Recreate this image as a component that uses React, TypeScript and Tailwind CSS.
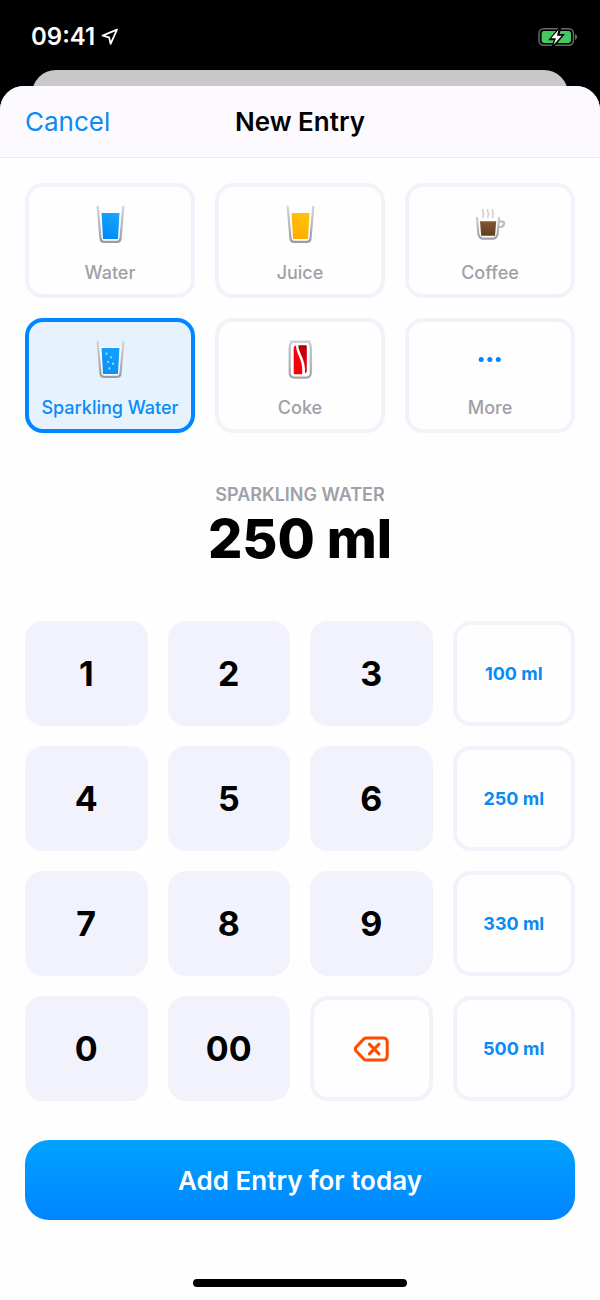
import { useState } from "react";

type Drink = {
  id: string;
  name: string;
  icon: React.ReactNode;
};

function LocationIcon() {
  return (
    <svg width="18" height="18" viewBox="0 0 18 18" fill="none">
      <path
        d="M16 1.600 1.600 7.600l6.500 1.800L9.600 15.800Z"
        stroke="#fff"
        strokeWidth="1.800"
        strokeLinejoin="round"
      />
    </svg>
  );
}

function BatteryIcon() {
  return (
    <svg width="40" height="20" viewBox="0 0 40 20" fill="none">
      <rect x="1" y="1.800" width="34.400" height="16.400" rx="4.600" stroke="#68686a" strokeWidth="1.500" />
      <path d="M37 7v6c1.300-.5 2.100-1.600 2.100-3S38.300 7.500 37 7Z" fill="#68686a" />
      <rect x="3.600" y="4" width="29.400" height="12" rx="2.400" fill="#43c862" />
      <path
        d="M20.400 1 10.200 13.300H15.800L13.600 19.200 16.600 19.200 27 6.900H21.600L23.200 1Z"
        fill="#000"
      />
      <path d="M20.500 3 13.200 11.300H18L15.500 18 23.600 8.700H18.900Z" fill="#fff" />
    </svg>
  );
}

function GlassIcon({ id, from, to, bubbles }: { id: string; from: string; to: string; bubbles?: boolean }) {
  return (
    <svg width="40" height="40" viewBox="0 0 40 40" fill="none">
      <defs>
        <linearGradient id={`${id}-glass`} x1="20" y1="2" x2="20" y2="39" gradientUnits="userSpaceOnUse">
          <stop stopColor="#d4d4da" />
          <stop offset="1" stopColor="#9a9aa2" />
        </linearGradient>
        <linearGradient id={`${id}-fill`} x1="29" y1="9" x2="14" y2="35" gradientUnits="userSpaceOnUse">
          <stop stopColor={from} />
          <stop offset="1" stopColor={to} />
        </linearGradient>
      </defs>
      <path
        d="M7.700 2.800 10.500 34.500Q10.900 37.900 14 37.900H27Q30.100 37.900 30.500 34.500L33.300 2.800L30.500 8H10.500Z"
        fill="#fff"
      />
      <path
        d="M7.700 2.800 10.500 34.500Q10.900 37.900 14 37.900H27Q30.100 37.900 30.500 34.500L33.300 2.800"
        stroke={`url(#${id}-glass)`}
        strokeWidth="2.200"
        strokeLinecap="round"
      />
      <path d="M11.500 9h18l-1.500 26h-15Z" fill={`url(#${id}-fill)`} />
      {bubbles && (
        <g fill="#a5deff">
          <circle cx="16.500" cy="14.700" r="1.100" />
          <circle cx="21.200" cy="18.300" r="1.100" />
          <circle cx="18" cy="23" r="1.100" />
          <circle cx="23" cy="24.700" r="1.100" />
          <circle cx="19.400" cy="29.400" r="1.100" />
        </g>
      )}
    </svg>
  );
}

function CoffeeIcon() {
  return (
    <svg width="40" height="40" viewBox="0 0 40 40" fill="none">
      <defs>
        <linearGradient id="cup" x1="18" y1="13" x2="18" y2="36" gradientUnits="userSpaceOnUse">
          <stop stopColor="#d0d0d6" />
          <stop offset="1" stopColor="#9e9ea6" />
        </linearGradient>
        <linearGradient id="coffee" x1="18" y1="17" x2="18" y2="32" gradientUnits="userSpaceOnUse">
          <stop stopColor="#855a34" />
          <stop offset="1" stopColor="#5f3b1e" />
        </linearGradient>
      </defs>
      <g stroke="#d5cfd4" strokeWidth="1.600" strokeLinecap="round">
        <path d="M13 5.500c-1.600 1.600 1.400 3 .6 5-.3 1-1.100 1.700-.4 3" />
        <path d="M17.800 5.500c-1.600 1.600 1.400 3 .6 5-.3 1-1.100 1.700-.4 3" />
        <path d="M22.600 5.500c-1.600 1.600 1.400 3 .6 5-.3 1-1.100 1.700-.4 3" />
      </g>
      <path
        d="M7 13.800 8.300 29.500Q9 34.600 13.500 34.600H22.500Q27 34.600 27.700 29.500L29 13.800"
        stroke="url(#cup)"
        strokeWidth="2.200"
        strokeLinecap="round"
      />
      <path
        d="M28.800 17.600H32.300Q34.200 17.600 34.100 19.500Q33.800 23 30.500 23H28.500"
        stroke="#bcbcc3"
        strokeWidth="2.200"
      />
      <path d="M10 17.200h16.200L25 31.800H11.200Z" fill="url(#coffee)" />
    </svg>
  );
}

function CanIcon() {
  return (
    <svg width="40" height="40" viewBox="0 0 40 40" fill="none">
      <defs>
        <linearGradient id="can" x1="20" y1="1" x2="20" y2="40" gradientUnits="userSpaceOnUse">
          <stop stopColor="#c9c9cf" />
          <stop offset="1" stopColor="#a3a3ab" />
        </linearGradient>
        <linearGradient id="cola" x1="26" y1="5" x2="22" y2="28" gradientUnits="userSpaceOnUse">
          <stop stopColor="#a8000c" />
          <stop offset="1" stopColor="#f0000b" />
        </linearGradient>
      </defs>
      <path
        d="M11.500 3.800Q9.700 5.500 9.700 8V33.500Q9.700 38.600 14.500 38.600H26Q30.800 38.600 30.800 33.500V8Q30.800 5.500 29 3.800"
        fill="#fff"
        stroke="url(#can)"
        strokeWidth="2.200"
      />
      <path d="M9.600 1.400H30.900Q30.600 3.800 29 4H11.500Q9.900 3.800 9.600 1.400Z" fill="#cfcfd5" />
      <path d="M13.700 9Q13.700 6.500 16 6.500C16.200 16 23.500 20 22.200 35.300H15Q13.700 35.300 13.700 34Z" fill="#f5000b" />
      <path d="M18.300 6.300H25.800Q26.800 6.300 26.800 7.300V33L25 34.500C26 20 18.300 14.500 18.300 6.300Z" fill="url(#cola)" />
    </svg>
  );
}

function DotsIcon() {
  return (
    <svg width="40" height="40" viewBox="0 0 40 40" fill="#0087ff">
      <circle cx="11.200" cy="20.600" r="2.500" />
      <circle cx="19.800" cy="20.600" r="2.500" />
      <circle cx="28.300" cy="20.600" r="2.500" />
    </svg>
  );
}

function DeleteIcon() {
  return (
    <svg width="36" height="26" viewBox="0 0 36 26" fill="none" stroke="#ff4a00" strokeWidth="3" strokeLinejoin="round" strokeLinecap="round">
      <path d="M13.300 1.900H30Q34.200 1.900 34.200 6.100V19.900Q34.200 24.100 30 24.100H13.300Q11.900 24.100 10.900 23.100L3.100 15Q1.500 13 3.100 11L10.900 2.900Q11.900 1.900 13.300 1.900Z" />
      <path d="M16.400 8.100 26 17.900M26 8.100 16.400 17.900" />
    </svg>
  );
}

const drinks: Drink[] = [
  { id: "water", name: "Water", icon: <GlassIcon id="water" from="#18a8ff" to="#0088f8" /> },
  { id: "juice", name: "Juice", icon: <GlassIcon id="juice" from="#ffc60a" to="#ffaa00" /> },
  { id: "coffee", name: "Coffee", icon: <CoffeeIcon /> },
  { id: "sparkling", name: "Sparkling Water", icon: <GlassIcon id="sparkling" from="#12a2ff" to="#0a90f5" bubbles /> },
  { id: "coke", name: "Coke", icon: <CanIcon /> },
  { id: "more", name: "More", icon: <DotsIcon /> },
];

// each row is three keys followed by a preset amount
const rows = [
  { keys: ["1", "2", "3"], preset: 100 },
  { keys: ["4", "5", "6"], preset: 250 },
  { keys: ["7", "8", "9"], preset: 330 },
  { keys: ["0", "00", "delete"], preset: 500 },
];

export default function App() {
  const [selected, setSelected] = useState("sparkling");
  const [amount, setAmount] = useState("250");

  const current = drinks.find((d) => d.id === selected);

  function pressKey(key: string) {
    if (key === "delete") {
      setAmount(amount.slice(0, -1) || "0");
      return;
    }
    const next = String(Number(amount + key));
    if (next.length <= 4) setAmount(next);
  }

  return (
    <div className="flex min-h-screen flex-col bg-black font-['Inter',sans-serif] text-black">
      {/* STATUS BAR */}
      <div className="flex h-[70px] items-center justify-between pt-1 pr-[22px] pl-[31px]">
        <div className="flex items-center gap-[6px] text-2xl font-semibold text-white">
          <span>09:41</span>
          <LocationIcon />
        </div>
        <BatteryIcon />
      </div>

      {/* Card behind the sheet */}
      <div className="mx-8 -mb-2 h-6 rounded-t-3xl bg-[#c9c7ca]" />

      {/* SHEET */}
      <main className="relative flex flex-1 flex-col overflow-hidden rounded-t-3xl bg-[#fefefe]">
        <header className="grid h-[72px] grid-cols-[1fr_auto_1fr] items-center border-b border-[#ebebef] bg-[#fcfaff] px-[25px] text-[26px]">
          <button className="justify-self-start text-[#0a8af5]">Cancel</button>
          <h1 className="font-semibold">New Entry</h1>
        </header>

        <div className="flex flex-1 flex-col px-[25px] pt-[25px]">
          {/* DRINKS */}
          <div className="grid grid-cols-3 gap-5">
            {drinks.map((d) => (
              <button
                key={d.id}
                aria-pressed={d.id === selected}
                onClick={() => setSelected(d.id)}
                className={`flex h-[115px] flex-col items-center gap-4 rounded-[18px] border-4 pt-[17px] text-[18px] leading-[26px] font-medium whitespace-nowrap ${
                  d.id === selected
                    ? "border-[#0087ff] bg-[#e6f3ff] text-[#0a8af5]"
                    : "border-[#f2f2fb] text-[#a0a0a8]"
                }`}
              >
                {d.icon}
                {d.name}
              </button>
            ))}
          </div>

          {/* AMOUNT */}
          <div className="flex h-[188px] flex-col items-center pt-[49px]">
            <p className="text-[18px] leading-[26px] font-semibold text-[#a0a0a8] uppercase">{current?.name}</p>
            <output className="text-[54px] leading-[62px] font-extrabold">{amount} ml</output>
          </div>

          {/* KEYPAD */}
          <div className="grid grid-cols-4 gap-5">
            {rows.map((row) => [
              ...row.keys.map((key) =>
                key === "delete" ? (
                  <button
                    key={key}
                    aria-label="Delete"
                    onClick={() => pressKey(key)}
                    className="flex h-[105px] items-center justify-center rounded-[18px] border-4 border-[#f2f2fb]"
                  >
                    <DeleteIcon />
                  </button>
                ) : (
                  <button
                    key={key}
                    onClick={() => pressKey(key)}
                    className="h-[105px] rounded-[18px] bg-[#f2f2fc] text-[34px] font-bold"
                  >
                    {key}
                  </button>
                )
              ),
              <button
                key={row.preset}
                onClick={() => setAmount(String(row.preset))}
                className="h-[105px] rounded-[18px] border-4 border-[#f2f2fb] text-[18px] font-bold text-[#0a8af5]"
              >
                {row.preset} ml
              </button>,
            ])}
          </div>

          {/* SUBMIT */}
          <button className="mt-[39px] h-20 rounded-3xl bg-linear-to-b from-[#00a2ff] to-[#0084ff] text-[26px] font-semibold text-white">
            Add Entry for today
          </button>

          {/* Home indicator */}
          <div className="mx-auto mt-auto mb-[13px] h-2 w-[214px] rounded-full bg-black" />
        </div>
      </main>
    </div>
  );
}
